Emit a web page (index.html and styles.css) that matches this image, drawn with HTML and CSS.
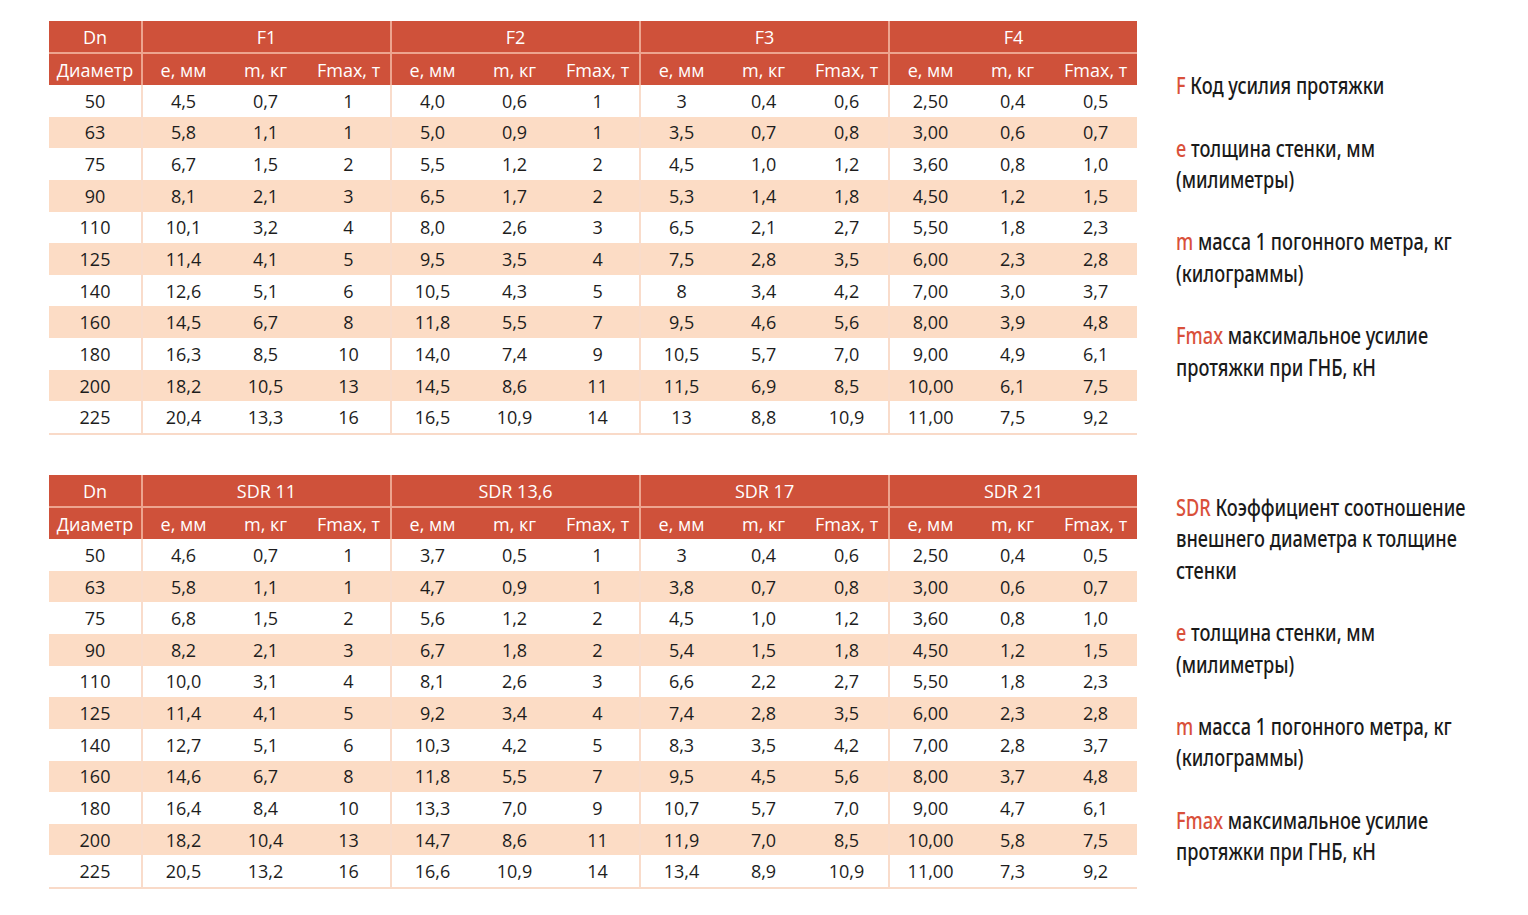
FILE: index.html
```html
<!DOCTYPE html>
<html lang="ru">
<head>
<meta charset="utf-8">
<title>Таблица труб</title>
<link rel="stylesheet" href="styles.css">
</head>
<body>
<div class="page">
  <section class="block">
    <table class="pipes">
      <colgroup><col class="c-dn"><col span="12" class="c-v"></colgroup>
      <thead>
        <tr class="h1"><th>Dn</th><th colspan="3" class="g">F1</th><th colspan="3" class="g">F2</th><th colspan="3" class="g">F3</th><th colspan="3" class="g">F4</th></tr>
        <tr class="h2"><th>Диаметр</th>
          <th class="g">e, мм</th><th>m, кг</th><th>Fmax, т</th>
          <th class="g">e, мм</th><th>m, кг</th><th>Fmax, т</th>
          <th class="g">e, мм</th><th>m, кг</th><th>Fmax, т</th>
          <th class="g">e, мм</th><th>m, кг</th><th>Fmax, т</th></tr>
      </thead>
      <tbody>
        <tr><td>50</td><td class="g">4,5</td><td>0,7</td><td>1</td><td class="g">4,0</td><td>0,6</td><td>1</td><td class="g">3</td><td>0,4</td><td>0,6</td><td class="g">2,50</td><td>0,4</td><td>0,5</td></tr>
        <tr><td>63</td><td class="g">5,8</td><td>1,1</td><td>1</td><td class="g">5,0</td><td>0,9</td><td>1</td><td class="g">3,5</td><td>0,7</td><td>0,8</td><td class="g">3,00</td><td>0,6</td><td>0,7</td></tr>
        <tr><td>75</td><td class="g">6,7</td><td>1,5</td><td>2</td><td class="g">5,5</td><td>1,2</td><td>2</td><td class="g">4,5</td><td>1,0</td><td>1,2</td><td class="g">3,60</td><td>0,8</td><td>1,0</td></tr>
        <tr><td>90</td><td class="g">8,1</td><td>2,1</td><td>3</td><td class="g">6,5</td><td>1,7</td><td>2</td><td class="g">5,3</td><td>1,4</td><td>1,8</td><td class="g">4,50</td><td>1,2</td><td>1,5</td></tr>
        <tr><td>110</td><td class="g">10,1</td><td>3,2</td><td>4</td><td class="g">8,0</td><td>2,6</td><td>3</td><td class="g">6,5</td><td>2,1</td><td>2,7</td><td class="g">5,50</td><td>1,8</td><td>2,3</td></tr>
        <tr><td>125</td><td class="g">11,4</td><td>4,1</td><td>5</td><td class="g">9,5</td><td>3,5</td><td>4</td><td class="g">7,5</td><td>2,8</td><td>3,5</td><td class="g">6,00</td><td>2,3</td><td>2,8</td></tr>
        <tr><td>140</td><td class="g">12,6</td><td>5,1</td><td>6</td><td class="g">10,5</td><td>4,3</td><td>5</td><td class="g">8</td><td>3,4</td><td>4,2</td><td class="g">7,00</td><td>3,0</td><td>3,7</td></tr>
        <tr><td>160</td><td class="g">14,5</td><td>6,7</td><td>8</td><td class="g">11,8</td><td>5,5</td><td>7</td><td class="g">9,5</td><td>4,6</td><td>5,6</td><td class="g">8,00</td><td>3,9</td><td>4,8</td></tr>
        <tr><td>180</td><td class="g">16,3</td><td>8,5</td><td>10</td><td class="g">14,0</td><td>7,4</td><td>9</td><td class="g">10,5</td><td>5,7</td><td>7,0</td><td class="g">9,00</td><td>4,9</td><td>6,1</td></tr>
        <tr><td>200</td><td class="g">18,2</td><td>10,5</td><td>13</td><td class="g">14,5</td><td>8,6</td><td>11</td><td class="g">11,5</td><td>6,9</td><td>8,5</td><td class="g">10,00</td><td>6,1</td><td>7,5</td></tr>
        <tr><td>225</td><td class="g">20,4</td><td>13,3</td><td>16</td><td class="g">16,5</td><td>10,9</td><td>14</td><td class="g">13</td><td>8,8</td><td>10,9</td><td class="g">11,00</td><td>7,5</td><td>9,2</td></tr>
      </tbody>
    </table>
    <div class="legend legend-f">
      <p><span class="key">F</span> Код усилия протяжки</p>
      <p><span class="key">е</span> толщина стенки, мм<br>(милиметры)</p>
      <p><span class="key">m</span> масса 1 погонного метра, кг<br>(килограммы)</p>
      <p><span class="key">Fmax</span> максимальное усилие<br>протяжки при ГНБ, кН</p>
    </div>
  </section>

  <section class="block">
    <table class="pipes">
      <colgroup><col class="c-dn"><col span="12" class="c-v"></colgroup>
      <thead>
        <tr class="h1"><th>Dn</th><th colspan="3" class="g">SDR 11</th><th colspan="3" class="g">SDR 13,6</th><th colspan="3" class="g">SDR 17</th><th colspan="3" class="g">SDR 21</th></tr>
        <tr class="h2"><th>Диаметр</th>
          <th class="g">e, мм</th><th>m, кг</th><th>Fmax, т</th>
          <th class="g">e, мм</th><th>m, кг</th><th>Fmax, т</th>
          <th class="g">e, мм</th><th>m, кг</th><th>Fmax, т</th>
          <th class="g">e, мм</th><th>m, кг</th><th>Fmax, т</th></tr>
      </thead>
      <tbody>
        <tr><td>50</td><td class="g">4,6</td><td>0,7</td><td>1</td><td class="g">3,7</td><td>0,5</td><td>1</td><td class="g">3</td><td>0,4</td><td>0,6</td><td class="g">2,50</td><td>0,4</td><td>0,5</td></tr>
        <tr><td>63</td><td class="g">5,8</td><td>1,1</td><td>1</td><td class="g">4,7</td><td>0,9</td><td>1</td><td class="g">3,8</td><td>0,7</td><td>0,8</td><td class="g">3,00</td><td>0,6</td><td>0,7</td></tr>
        <tr><td>75</td><td class="g">6,8</td><td>1,5</td><td>2</td><td class="g">5,6</td><td>1,2</td><td>2</td><td class="g">4,5</td><td>1,0</td><td>1,2</td><td class="g">3,60</td><td>0,8</td><td>1,0</td></tr>
        <tr><td>90</td><td class="g">8,2</td><td>2,1</td><td>3</td><td class="g">6,7</td><td>1,8</td><td>2</td><td class="g">5,4</td><td>1,5</td><td>1,8</td><td class="g">4,50</td><td>1,2</td><td>1,5</td></tr>
        <tr><td>110</td><td class="g">10,0</td><td>3,1</td><td>4</td><td class="g">8,1</td><td>2,6</td><td>3</td><td class="g">6,6</td><td>2,2</td><td>2,7</td><td class="g">5,50</td><td>1,8</td><td>2,3</td></tr>
        <tr><td>125</td><td class="g">11,4</td><td>4,1</td><td>5</td><td class="g">9,2</td><td>3,4</td><td>4</td><td class="g">7,4</td><td>2,8</td><td>3,5</td><td class="g">6,00</td><td>2,3</td><td>2,8</td></tr>
        <tr><td>140</td><td class="g">12,7</td><td>5,1</td><td>6</td><td class="g">10,3</td><td>4,2</td><td>5</td><td class="g">8,3</td><td>3,5</td><td>4,2</td><td class="g">7,00</td><td>2,8</td><td>3,7</td></tr>
        <tr><td>160</td><td class="g">14,6</td><td>6,7</td><td>8</td><td class="g">11,8</td><td>5,5</td><td>7</td><td class="g">9,5</td><td>4,5</td><td>5,6</td><td class="g">8,00</td><td>3,7</td><td>4,8</td></tr>
        <tr><td>180</td><td class="g">16,4</td><td>8,4</td><td>10</td><td class="g">13,3</td><td>7,0</td><td>9</td><td class="g">10,7</td><td>5,7</td><td>7,0</td><td class="g">9,00</td><td>4,7</td><td>6,1</td></tr>
        <tr><td>200</td><td class="g">18,2</td><td>10,4</td><td>13</td><td class="g">14,7</td><td>8,6</td><td>11</td><td class="g">11,9</td><td>7,0</td><td>8,5</td><td class="g">10,00</td><td>5,8</td><td>7,5</td></tr>
        <tr><td>225</td><td class="g">20,5</td><td>13,2</td><td>16</td><td class="g">16,6</td><td>10,9</td><td>14</td><td class="g">13,4</td><td>8,9</td><td>10,9</td><td class="g">11,00</td><td>7,3</td><td>9,2</td></tr>
      </tbody>
    </table>
    <div class="legend legend-sdr">
      <p><span class="key">SDR</span> Коэффициент соотношение<br>внешнего диаметра к толщине<br>стенки</p>
      <p><span class="key">е</span> толщина стенки, мм<br>(милиметры)</p>
      <p><span class="key">m</span> масса 1 погонного метра, кг<br>(килограммы)</p>
      <p><span class="key">Fmax</span> максимальное усилие<br>протяжки при ГНБ, кН</p>
    </div>
  </section>
</div>
</body>
</html>
```

FILE: styles.css
```css
html, body {
  margin: 0;
  padding: 0;
  background: #ffffff;
}

.page {
  display: flex;
  flex-direction: column;
  gap: 40px;
  padding: 21px 0 0 49px;
}

.block {
  display: flex;
  align-items: flex-start;
  gap: 39px;
}

.pipes {
  flex: 0 0 auto;
  width: 1088px;
  table-layout: fixed;
  border-collapse: separate;
  border-spacing: 0;
  font-family: "Open Sans", "Noto Sans", sans-serif;
  font-size: 18px;
  color: #1d1d1d;
  border-bottom: 2px solid #f9dac8;
}

.c-dn { width: 92px; }
.c-v { width: 83px; }

.pipes th,
.pipes td {
  padding: 0;
  text-align: center;
  white-space: nowrap;
  font-weight: 400;
}

.pipes th {
  background: #cf513a;
  color: #ffffff;
}

.pipes .h1 th {
  height: 31px;
  border-bottom: 2px solid #eda48f;
}

.pipes .h2 th {
  height: 31px;
}

.pipes th.g {
  border-left: 2px solid #eda48f;
}

.pipes td {
  height: 31.65px;
}

.pipes td.g {
  border-left: 2px solid #f9dccb;
}

.pipes tbody tr:nth-child(even) td {
  background: #fcdcc5;
}

.legend {
  flex: 0 0 auto;
  font-family: "Noto Sans", "DejaVu Sans", sans-serif;
  font-weight: 500;
  font-size: 23px;
  line-height: 31.3px;
  color: #1a1a1a;
  white-space: nowrap;
  transform: scaleX(0.79);
  transform-origin: left top;
}

.legend p {
  margin: 0 0 31.3px 0;
}

.legend-f { padding-top: 49px; }
.legend-sdr { padding-top: 17px; }

.key {
  color: #d9503a;
}
```
